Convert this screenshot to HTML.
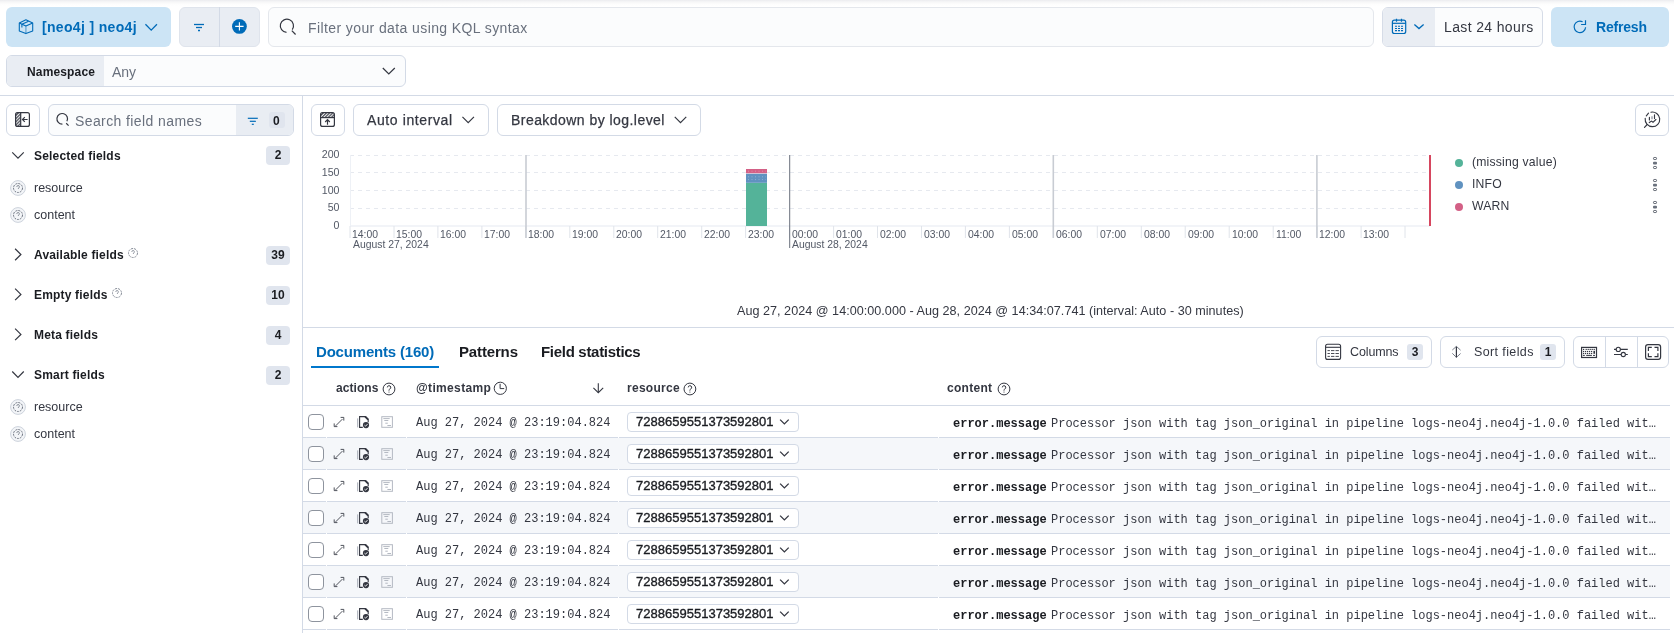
<!DOCTYPE html>
<html><head><meta charset="utf-8">
<style>
*{box-sizing:border-box;margin:0;padding:0}
html,body{width:1674px;height:633px;overflow:hidden;background:#fff;font-family:"Liberation Sans",sans-serif;color:#343741}
.a{position:absolute}
.t{position:absolute;white-space:pre;line-height:1;will-change:transform}
.s{position:absolute;overflow:visible}
</style></head>
<body>
<div class="a" style="left:0;top:0;width:1674px;height:6px;background:linear-gradient(#ebecef,#f6f6f7 30%,#fdfdfd 70%,#fff)"></div>

<div class="a" style="left:6px;top:7px;width:165px;height:40px;background:#cce4f5;border-radius:6px;"></div>
<svg class="s" style="left:14px;top:14px;" width="26" height="26" viewBox="14 14 26 26"><g fill="none" stroke="#006bb8" stroke-width="1.1" stroke-linejoin="round">
<path d="M25.9 19.8 L32.7 22.9 L32.7 30.9 L25.9 33.6 L19.3 30.9 L19.3 22.9 Z"/>
<path d="M19.3 22.9 L25.9 26.1 L32.7 22.9"/>
<path d="M21.9 27.5 L21.9 24.3 L28.6 21.2"/>
</g><path d="M25.9 26.3 L25.9 33.3" stroke="#006bb8" stroke-opacity="0.45" stroke-width="1.4"/></svg>
<div class="t" style="left:42px;top:20px;font-size:14px;font-weight:bold;color:#006bb8;letter-spacing:0.33px;">[neo4j ] neo4j</div>
<svg class="s" style="left:140px;top:18px;" width="22" height="16" viewBox="140 18 22 16"><path d="M145.45 24.3 L151.2 30.099999999999998 L156.95 24.3" fill="none" stroke="#006bb8" stroke-width="1.3"/></svg>
<div class="a" style="left:179px;top:7px;width:81px;height:40px;background:#e9edf3;border:1px solid #dfe4ec;border-radius:6px;"></div>
<div class="a" style="left:219px;top:7px;width:1px;height:40px;background:#d3dae6"></div>
<svg class="s" style="left:190px;top:20px;" width="20" height="14" viewBox="190 20 20 14"><g stroke="#006bb8" stroke-width="1.3"><path d="M194 24.5 H204"/><path d="M196 27.5 H202"/><path d="M198 30.5 H200"/></g></svg>
<svg class="s" style="left:230px;top:17px;" width="20" height="20" viewBox="230 17 20 20"><circle cx="239.4" cy="26.4" r="7.4" fill="#006bb8"/><path d="M235.2 26.4 H243.6 M239.4 22.2 V30.6" stroke="#fff" stroke-width="1.1"/></svg>
<div class="a" style="left:268px;top:7px;width:1106px;height:40px;background:#fbfcfd;border:1px solid #e4e7ec;border-radius:6px;"></div>
<svg class="s" style="left:276px;top:16px;" width="24" height="22" viewBox="276 16 24 22"><g fill="none" stroke="#343741" stroke-width="1.2"><path d="M286.5 32.4 A6.6 6.6 0 1 1 292.3 29.6"/><path d="M291.8 30.6 L295.6 34.5"/></g></svg>
<div class="t" style="left:308.3px;top:21px;font-size:14px;font-weight:normal;color:#69707d;letter-spacing:0.4px;">Filter your data using KQL syntax</div>
<div class="a" style="left:1382px;top:7px;width:161px;height:40px;border:1px solid #d6dce7;border-radius:6px;background:#fbfcfd;overflow:hidden"><div class="a" style="left:0;top:0;width:52px;height:40px;background:#e9edf3"></div></div>
<svg class="s" style="left:1388px;top:16px;" width="40" height="22" viewBox="1388 16 40 22"><g fill="none" stroke="#006bb8" stroke-width="1.2"><rect x="1392.4" y="20.2" width="13.3" height="13.3" rx="2"/><path d="M1392.4 23.3 H1405.7"/><path d="M1396.5 18.8 V21.8 M1401.5 18.8 V21.8"/></g>
<g stroke="#006bb8" stroke-width="1.1"><path d="M1395 26.3 h2 m1 0 h2 m1 0 h2 M1395 28.5 h2 m1 0 h2 m1 0 h2 M1395 30.6 h2 m1 0 h2 m1 0 h2"/></g>
<path d="M1414.4 24.4 L1419 28.6 L1423.6 24.4" fill="none" stroke="#006bb8" stroke-width="1.3"/></svg>
<div class="t" style="left:1444px;top:20.3px;font-size:14px;font-weight:normal;color:#343741;letter-spacing:0.36px;">Last 24 hours</div>
<div class="a" style="left:1551px;top:7px;width:118px;height:40px;background:#cce4f5;border-radius:6px;"></div>
<svg class="s" style="left:1570px;top:16px;" width="22" height="22" viewBox="1570 16 22 22"><g fill="none" stroke="#006bb8" stroke-width="1.2"><path d="M1582.6 21.8 A5.75 5.75 0 1 0 1585.6 27.2"/><path d="M1585.5 20.2 V24.5 H1581.1"/></g></svg>
<div class="t" style="left:1596.3px;top:19.6px;font-size:14px;font-weight:bold;color:#006bb8;letter-spacing:-0.19px;">Refresh</div>
<div class="a" style="left:6px;top:55px;width:400px;height:32px;border:1px solid #d3dae6;border-radius:6px;background:#fbfcfd;overflow:hidden"><div class="a" style="left:0;top:0;width:97px;height:32px;background:#e9edf3"></div></div>
<div class="t" style="left:27px;top:66px;font-size:12px;font-weight:bold;color:#1a1c21;letter-spacing:0.15px;">Namespace</div>
<div class="t" style="left:112px;top:65px;font-size:14px;font-weight:normal;color:#69707d;letter-spacing:0px;">Any</div>
<svg class="s" style="left:376px;top:62px;" width="26" height="18" viewBox="376 62 26 18"><path d="M382.8 68.0 L388.8 74.0 L394.8 68.0" fill="none" stroke="#343741" stroke-width="1.2"/></svg>
<div class="a" style="left:0;top:95px;width:1674px;height:1px;background:#d3dae6"></div>
<div class="a" style="left:302px;top:96px;width:1px;height:537px;background:#d3dae6"></div>
<div class="a" style="left:6px;top:104px;width:34px;height:32px;background:#fff;border:1px solid #d3dae6;border-radius:6px;"></div>
<svg class="s" style="left:12px;top:110px;" width="22" height="20" viewBox="12 110 22 20"><defs><pattern id="hatch" width="2.2" height="2.2" patternUnits="userSpaceOnUse" patternTransform="rotate(45)"><rect width="1.1" height="2.2" fill="#343741"/></pattern></defs>
<rect x="15.8" y="112.7" width="4.8" height="13.4" fill="url(#hatch)"/>
<g fill="none" stroke="#343741" stroke-width="1.2"><rect x="15.6" y="112.6" width="13.8" height="13.8" rx="2"/><path d="M20.7 112.6 V126.4"/><path d="M27.6 119.5 H22.6 M24.8 117.2 L22.5 119.5 L24.8 121.8"/></g></svg>
<div class="a" style="left:48px;top:104px;width:246px;height:32px;border:1px solid #d3dae6;border-radius:6px;background:#fbfcfd;overflow:hidden"><div class="a" style="left:187px;top:0;width:60px;height:32px;background:#e9edf3"></div></div>
<svg class="s" style="left:54px;top:112px;" width="18" height="18" viewBox="54 112 18 18"><g fill="none" stroke="#343741" stroke-width="1.2"><path d="M62.4 124.1 A5.3 5.3 0 1 1 66.9 121.3"/><path d="M66.2 123.3 L68.6 125.6"/></g></svg>
<div class="t" style="left:74.6px;top:114px;font-size:14px;font-weight:normal;color:#69707d;letter-spacing:0.4px;">Search field names</div>
<svg class="s" style="left:245px;top:114px;" width="16" height="12" viewBox="245 114 16 12"><g stroke="#006bb8" stroke-width="1.2"><path d="M247.8 118.3 H257.8"/><path d="M249.8 121.3 H255.8"/><path d="M251.8 124.3 H253.8"/></g></svg>
<div class="a" style="left:269px;top:112px;width:16px;height:16px;background:#e0e5ee;border-radius:3px"></div>
<div class="t" style="left:273px;top:115px;font-size:12px;font-weight:bold;color:#1a1c21;letter-spacing:0px;">0</div>
<svg class="s" style="left:8px;top:147px;" width="20" height="16" viewBox="8 147 20 16"><path d="M12.25 152.4 L18 158.20000000000002 L23.75 152.4" fill="none" stroke="#343741" stroke-width="1.2"/></svg>
<div class="t" style="left:34.4px;top:150px;font-size:12px;font-weight:bold;color:#1a1c21;letter-spacing:0.18px;">Selected fields</div>
<div class="a" style="left:266px;top:145.5px;width:24px;height:19px;background:#e0e5ee;border-radius:4px"></div>
<div class="t" style="left:266px;top:149px;width:24px;text-align:center;font-size:12px;font-weight:bold;color:#1a1c21">2</div>
<svg class="s" style="left:8px;top:178px;" width="20" height="20" viewBox="8 178 20 20"><circle cx="18" cy="188" r="7.4" fill="#f3f5f8" stroke="#cdd3dc" stroke-width="1"/><circle cx="18" cy="188" r="4.5" fill="none" stroke="#6f7682" stroke-width="1" stroke-dasharray="2 1"/><path d="M16.8 186.9 a1.3 1.3 0 1 1 1.6 1.2 v0.8" fill="none" stroke="#6f7682" stroke-width="0.8"/></svg>
<div class="t" style="left:34.4px;top:182px;font-size:12.5px;font-weight:normal;color:#343741;letter-spacing:0px;">resource</div>
<svg class="s" style="left:8px;top:205px;" width="20" height="20" viewBox="8 205 20 20"><circle cx="18" cy="215" r="7.4" fill="#f3f5f8" stroke="#cdd3dc" stroke-width="1"/><circle cx="18" cy="215" r="4.5" fill="none" stroke="#6f7682" stroke-width="1" stroke-dasharray="2 1"/><path d="M16.8 213.9 a1.3 1.3 0 1 1 1.6 1.2 v0.8" fill="none" stroke="#6f7682" stroke-width="0.8"/></svg>
<div class="t" style="left:34.4px;top:209px;font-size:12.5px;font-weight:normal;color:#343741;letter-spacing:0px;">content</div>
<svg class="s" style="left:10px;top:246px;" width="16" height="18" viewBox="10 246 16 18"><path d="M15.1 248.75 L20.9 254.5 L15.1 260.25" fill="none" stroke="#343741" stroke-width="1.2"/></svg>
<div class="t" style="left:34.4px;top:249.3px;font-size:12px;font-weight:bold;color:#1a1c21;letter-spacing:0.18px;">Available fields</div>
<svg class="s" style="left:127px;top:246.8px;" width="12" height="12" viewBox="127 246.8 12 12"><circle cx="133" cy="252.8" r="4.5" fill="none" stroke="#8a909b" stroke-width="1" stroke-dasharray="2.2 0.9"/><path d="M131.8 251.70000000000002 a1.3 1.3 0 1 1 1.6 1.2 v0.9" fill="none" stroke="#8a909b" stroke-width="0.9"/></svg>
<div class="a" style="left:266px;top:245.5px;width:24px;height:19px;background:#e0e5ee;border-radius:4px"></div>
<div class="t" style="left:266px;top:249px;width:24px;text-align:center;font-size:12px;font-weight:bold;color:#1a1c21">39</div>
<svg class="s" style="left:10px;top:286px;" width="16" height="18" viewBox="10 286 16 18"><path d="M15.1 288.65 L20.9 294.4 L15.1 300.15" fill="none" stroke="#343741" stroke-width="1.2"/></svg>
<div class="t" style="left:34.4px;top:289.2px;font-size:12px;font-weight:bold;color:#1a1c21;letter-spacing:0.18px;">Empty fields</div>
<svg class="s" style="left:111px;top:286.8px;" width="12" height="12" viewBox="111 286.8 12 12"><circle cx="117" cy="292.8" r="4.5" fill="none" stroke="#8a909b" stroke-width="1" stroke-dasharray="2.2 0.9"/><path d="M115.8 291.7 a1.3 1.3 0 1 1 1.6 1.2 v0.9" fill="none" stroke="#8a909b" stroke-width="0.9"/></svg>
<div class="a" style="left:266px;top:285.5px;width:24px;height:19px;background:#e0e5ee;border-radius:4px"></div>
<div class="t" style="left:266px;top:289px;width:24px;text-align:center;font-size:12px;font-weight:bold;color:#1a1c21">10</div>
<svg class="s" style="left:10px;top:326px;" width="16" height="18" viewBox="10 326 16 18"><path d="M15.1 328.65 L20.9 334.4 L15.1 340.15" fill="none" stroke="#343741" stroke-width="1.2"/></svg>
<div class="t" style="left:34.4px;top:329.2px;font-size:12px;font-weight:bold;color:#1a1c21;letter-spacing:0.18px;">Meta fields</div>
<div class="a" style="left:266px;top:325.5px;width:24px;height:19px;background:#e0e5ee;border-radius:4px"></div>
<div class="t" style="left:266px;top:329px;width:24px;text-align:center;font-size:12px;font-weight:bold;color:#1a1c21">4</div>
<svg class="s" style="left:8px;top:367px;" width="20" height="16" viewBox="8 367 20 16"><path d="M12.25 371.50000000000006 L18 377.3 L23.75 371.50000000000006" fill="none" stroke="#343741" stroke-width="1.2"/></svg>
<div class="t" style="left:34.4px;top:369.1px;font-size:12px;font-weight:bold;color:#1a1c21;letter-spacing:0.18px;">Smart fields</div>
<div class="a" style="left:266px;top:365.5px;width:24px;height:19px;background:#e0e5ee;border-radius:4px"></div>
<div class="t" style="left:266px;top:369px;width:24px;text-align:center;font-size:12px;font-weight:bold;color:#1a1c21">2</div>
<svg class="s" style="left:8px;top:397px;" width="20" height="20" viewBox="8 397 20 20"><circle cx="18" cy="407" r="7.4" fill="#f3f5f8" stroke="#cdd3dc" stroke-width="1"/><circle cx="18" cy="407" r="4.5" fill="none" stroke="#6f7682" stroke-width="1" stroke-dasharray="2 1"/><path d="M16.8 405.9 a1.3 1.3 0 1 1 1.6 1.2 v0.8" fill="none" stroke="#6f7682" stroke-width="0.8"/></svg>
<div class="t" style="left:34.4px;top:401px;font-size:12.5px;font-weight:normal;color:#343741;letter-spacing:0px;">resource</div>
<svg class="s" style="left:8px;top:424px;" width="20" height="20" viewBox="8 424 20 20"><circle cx="18" cy="434" r="7.4" fill="#f3f5f8" stroke="#cdd3dc" stroke-width="1"/><circle cx="18" cy="434" r="4.5" fill="none" stroke="#6f7682" stroke-width="1" stroke-dasharray="2 1"/><path d="M16.8 432.9 a1.3 1.3 0 1 1 1.6 1.2 v0.8" fill="none" stroke="#6f7682" stroke-width="0.8"/></svg>
<div class="t" style="left:34.4px;top:428px;font-size:12.5px;font-weight:normal;color:#343741;letter-spacing:0px;">content</div>
<div class="a" style="left:311px;top:104px;width:34px;height:32px;background:#fff;border:1px solid #d3dae6;border-radius:6px;"></div>
<svg class="s" style="left:316px;top:108px;" width="24" height="24" viewBox="316 108 24 24"><rect x="320.8" y="112.7" width="13.4" height="4.8" fill="url(#hatch)"/>
<g fill="none" stroke="#343741" stroke-width="1.2"><rect x="320.6" y="112.6" width="13.8" height="13.8" rx="2"/><path d="M320.6 117.6 H334.4"/><path d="M327.5 124.8 V119.8 M325.2 122 L327.5 119.7 L329.8 122"/></g></svg>
<div class="a" style="left:353px;top:104px;width:136px;height:32px;background:#fff;border:1px solid #d3dae6;border-radius:6px;"></div>
<div class="t" style="left:367px;top:112.6px;font-size:14px;font-weight:normal;color:#343741;letter-spacing:0.6px;-webkit-text-stroke:0.25px #343741;">Auto interval</div>
<svg class="s" style="left:458px;top:112px;" width="20" height="16" viewBox="458 112 20 16"><path d="M462.45 116.89999999999999 L468.2 122.7 L473.95 116.89999999999999" fill="none" stroke="#343741" stroke-width="1.2"/></svg>
<div class="a" style="left:497px;top:104px;width:204px;height:32px;background:#fff;border:1px solid #d3dae6;border-radius:6px;"></div>
<div class="t" style="left:510.5px;top:112.6px;font-size:14px;font-weight:normal;color:#343741;letter-spacing:0.45px;-webkit-text-stroke:0.25px #343741;">Breakdown by log.level</div>
<svg class="s" style="left:670px;top:112px;" width="20" height="16" viewBox="670 112 20 16"><path d="M674.75 116.89999999999999 L680.5 122.7 L686.25 116.89999999999999" fill="none" stroke="#343741" stroke-width="1.2"/></svg>
<div class="a" style="left:1635px;top:104px;width:34px;height:32px;background:#fff;border:1px solid #d3dae6;border-radius:6px;"></div>
<svg class="s" style="left:1640px;top:108px;" width="26" height="24" viewBox="1640 108 26 24"><g fill="none" stroke="#343741" stroke-width="1.15" stroke-linecap="round"><path d="M1650.9 112.2 A7.3 7.3 0 1 1 1645.2 118.4"/><path d="M1646.3 115.8 L1648.5 113.2"/><path d="M1647.2 124.5 L1644.5 127.4"/><path d="M1649.4 117.4 V120 M1654.5 114.8 V118.5"/><path d="M1649.3 122.6 L1651.5 121.1 L1653 122.3 L1655.9 119.5"/></g><path d="M1652 116.3 V119.3" stroke="#8a909b" stroke-width="1.2"/></svg>
<svg class="s" style="left:304px;top:140px;" width="1370" height="120" viewBox="304 140 1370 120"><path d="M350 155.5 H1430" stroke="#e6e9ef" stroke-width="1" stroke-dasharray="4 4"/><path d="M350 172.5 H1430" stroke="#e6e9ef" stroke-width="1" stroke-dasharray="4 4"/><path d="M350 190.5 H1430" stroke="#e6e9ef" stroke-width="1" stroke-dasharray="4 4"/><path d="M350 208.5 H1430" stroke="#e6e9ef" stroke-width="1" stroke-dasharray="4 4"/><path d="M350 226 H1430" stroke="#eef1f6" stroke-width="1.5"/><path d="M350.5 155 V226" stroke="#eef1f6" stroke-width="1"/><path d="M350.0 226 V238" stroke="#e0e4ea" stroke-width="1"/><path d="M394.0 226 V238" stroke="#e0e4ea" stroke-width="1"/><path d="M437.9 226 V238" stroke="#e0e4ea" stroke-width="1"/><path d="M481.9 226 V238" stroke="#e0e4ea" stroke-width="1"/><path d="M525.8 226 V238" stroke="#e0e4ea" stroke-width="1"/><path d="M569.8 226 V238" stroke="#e0e4ea" stroke-width="1"/><path d="M613.8 226 V238" stroke="#e0e4ea" stroke-width="1"/><path d="M657.7 226 V238" stroke="#e0e4ea" stroke-width="1"/><path d="M701.7 226 V238" stroke="#e0e4ea" stroke-width="1"/><path d="M745.6 226 V238" stroke="#e0e4ea" stroke-width="1"/><path d="M789.6 226 V238" stroke="#e0e4ea" stroke-width="1"/><path d="M833.6 226 V238" stroke="#e0e4ea" stroke-width="1"/><path d="M877.5 226 V238" stroke="#e0e4ea" stroke-width="1"/><path d="M921.5 226 V238" stroke="#e0e4ea" stroke-width="1"/><path d="M965.4 226 V238" stroke="#e0e4ea" stroke-width="1"/><path d="M1009.4 226 V238" stroke="#e0e4ea" stroke-width="1"/><path d="M1053.4 226 V238" stroke="#e0e4ea" stroke-width="1"/><path d="M1097.3 226 V238" stroke="#e0e4ea" stroke-width="1"/><path d="M1141.3 226 V238" stroke="#e0e4ea" stroke-width="1"/><path d="M1185.2 226 V238" stroke="#e0e4ea" stroke-width="1"/><path d="M1229.2 226 V238" stroke="#e0e4ea" stroke-width="1"/><path d="M1273.2 226 V238" stroke="#e0e4ea" stroke-width="1"/><path d="M1317.1 226 V238" stroke="#e0e4ea" stroke-width="1"/><path d="M1361.1 226 V238" stroke="#e0e4ea" stroke-width="1"/><path d="M1405.0 226 V238" stroke="#e0e4ea" stroke-width="1"/><rect x="746" y="182.8" width="21" height="43.2" fill="#54b399"/><rect x="746" y="173.6" width="21" height="9.2" fill="#6092c0"/><rect x="746" y="169" width="21" height="4.3" fill="#d36086"/><path d="M746 173.45 H767" stroke="#fff" stroke-opacity="0.5" stroke-width="0.5"/><path d="M748 171.2 H766" stroke="#fff" stroke-opacity="0.35" stroke-width="0.8" stroke-dasharray="1 2.5"/><path d="M748 176.8 H766" stroke="#fff" stroke-opacity="0.35" stroke-width="0.8" stroke-dasharray="1 2.5"/><path d="M748 179.6 H766" stroke="#fff" stroke-opacity="0.35" stroke-width="0.8" stroke-dasharray="1 2.5"/><path d="M526 155 V238" stroke="#c8ccd3" stroke-width="1.6"/><path d="M789.7 155 V248" stroke="#6a717d" stroke-width="1"/><path d="M1053.3 155 V238" stroke="#c8ccd3" stroke-width="1.6"/><path d="M1316.9 155 V238" stroke="#c8ccd3" stroke-width="1.6"/><path d="M1430 155 V226" stroke="#d6465f" stroke-width="2"/></svg>
<div class="t" style="left:300px;top:149px;width:39.5px;text-align:right;font-size:10.6px;color:#535966">200</div>
<div class="t" style="left:300px;top:166.75px;width:39.5px;text-align:right;font-size:10.6px;color:#535966">150</div>
<div class="t" style="left:300px;top:184.5px;width:39.5px;text-align:right;font-size:10.6px;color:#535966">100</div>
<div class="t" style="left:300px;top:202.25px;width:39.5px;text-align:right;font-size:10.6px;color:#535966">50</div>
<div class="t" style="left:300px;top:220px;width:39.5px;text-align:right;font-size:10.6px;color:#535966">0</div>
<div class="t" style="left:352.3px;top:229.5px;font-size:10.4px;color:#535966">14:00</div>
<div class="t" style="left:396.3px;top:229.5px;font-size:10.4px;color:#535966">15:00</div>
<div class="t" style="left:440.2px;top:229.5px;font-size:10.4px;color:#535966">16:00</div>
<div class="t" style="left:484.2px;top:229.5px;font-size:10.4px;color:#535966">17:00</div>
<div class="t" style="left:528.1px;top:229.5px;font-size:10.4px;color:#535966">18:00</div>
<div class="t" style="left:572.1px;top:229.5px;font-size:10.4px;color:#535966">19:00</div>
<div class="t" style="left:616.1px;top:229.5px;font-size:10.4px;color:#535966">20:00</div>
<div class="t" style="left:660.0px;top:229.5px;font-size:10.4px;color:#535966">21:00</div>
<div class="t" style="left:704.0px;top:229.5px;font-size:10.4px;color:#535966">22:00</div>
<div class="t" style="left:747.9px;top:229.5px;font-size:10.4px;color:#535966">23:00</div>
<div class="t" style="left:791.9px;top:229.5px;font-size:10.4px;color:#535966">00:00</div>
<div class="t" style="left:835.9px;top:229.5px;font-size:10.4px;color:#535966">01:00</div>
<div class="t" style="left:879.8px;top:229.5px;font-size:10.4px;color:#535966">02:00</div>
<div class="t" style="left:923.8px;top:229.5px;font-size:10.4px;color:#535966">03:00</div>
<div class="t" style="left:967.7px;top:229.5px;font-size:10.4px;color:#535966">04:00</div>
<div class="t" style="left:1011.7px;top:229.5px;font-size:10.4px;color:#535966">05:00</div>
<div class="t" style="left:1055.7px;top:229.5px;font-size:10.4px;color:#535966">06:00</div>
<div class="t" style="left:1099.6px;top:229.5px;font-size:10.4px;color:#535966">07:00</div>
<div class="t" style="left:1143.6px;top:229.5px;font-size:10.4px;color:#535966">08:00</div>
<div class="t" style="left:1187.5px;top:229.5px;font-size:10.4px;color:#535966">09:00</div>
<div class="t" style="left:1231.5px;top:229.5px;font-size:10.4px;color:#535966">10:00</div>
<div class="t" style="left:1275.5px;top:229.5px;font-size:10.4px;color:#535966">11:00</div>
<div class="t" style="left:1319.4px;top:229.5px;font-size:10.4px;color:#535966">12:00</div>
<div class="t" style="left:1363.4px;top:229.5px;font-size:10.4px;color:#535966">13:00</div>
<div class="t" style="left:352.6px;top:240px;font-size:10.4px;color:#535966">August 27, 2024</div>
<div class="t" style="left:792px;top:240px;font-size:10.4px;color:#535966">August 28, 2024</div>
<svg class="s" style="left:1454px;top:157.9px;" width="10" height="10" viewBox="1454 157.9 10 10"><circle cx="1459" cy="162.9" r="4" fill="#54b399"/></svg>
<div class="t" style="left:1471.6px;top:155.9px;font-size:12.2px;letter-spacing:0.2px;color:#343741">(missing value)</div>
<svg class="s" style="left:1650px;top:155.9px;" width="10" height="14" viewBox="1650 155.9 10 14"><g fill="none" stroke="#5a606b" stroke-width="1"><rect x="1653.5" y="157.4" width="3" height="2" rx="0.7"/><rect x="1653.5" y="166.4" width="3" height="2" rx="0.7"/></g><rect x="1653" y="161.70000000000002" width="4" height="2.6" rx="1" fill="#6a717d"/></svg>
<svg class="s" style="left:1454px;top:179.8px;" width="10" height="10" viewBox="1454 179.8 10 10"><circle cx="1459" cy="184.8" r="4" fill="#6092c0"/></svg>
<div class="t" style="left:1471.6px;top:177.8px;font-size:12.2px;letter-spacing:0.2px;color:#343741">INFO</div>
<svg class="s" style="left:1650px;top:177.8px;" width="10" height="14" viewBox="1650 177.8 10 14"><g fill="none" stroke="#5a606b" stroke-width="1"><rect x="1653.5" y="179.3" width="3" height="2" rx="0.7"/><rect x="1653.5" y="188.3" width="3" height="2" rx="0.7"/></g><rect x="1653" y="183.60000000000002" width="4" height="2.6" rx="1" fill="#6a717d"/></svg>
<svg class="s" style="left:1454px;top:201.8px;" width="10" height="10" viewBox="1454 201.8 10 10"><circle cx="1459" cy="206.8" r="4" fill="#d36086"/></svg>
<div class="t" style="left:1471.6px;top:199.8px;font-size:12.2px;letter-spacing:0.2px;color:#343741">WARN</div>
<svg class="s" style="left:1650px;top:199.8px;" width="10" height="14" viewBox="1650 199.8 10 14"><g fill="none" stroke="#5a606b" stroke-width="1"><rect x="1653.5" y="201.3" width="3" height="2" rx="0.7"/><rect x="1653.5" y="210.3" width="3" height="2" rx="0.7"/></g><rect x="1653" y="205.60000000000002" width="4" height="2.6" rx="1" fill="#6a717d"/></svg>
<div class="t" style="left:737px;top:305px;font-size:12.6px;font-weight:normal;color:#343741;letter-spacing:0.026px;">Aug 27, 2024 @ 14:00:00.000 - Aug 28, 2024 @ 14:34:07.741 (interval: Auto - 30 minutes)</div>
<div class="a" style="left:303px;top:327px;width:1371px;height:1px;background:#d3dae6"></div>
<div class="t" style="left:315.7px;top:344px;font-size:15px;font-weight:bold;color:#006bb8;letter-spacing:-0.19px;">Documents (160)</div>
<div class="a" style="left:311px;top:366px;width:128px;height:2px;background:#0077cc"></div>
<div class="t" style="left:459px;top:344px;font-size:15px;font-weight:bold;color:#1a1c21;letter-spacing:-0.15px;">Patterns</div>
<div class="t" style="left:541.3px;top:344px;font-size:15px;font-weight:bold;color:#1a1c21;letter-spacing:-0.3px;">Field statistics</div>
<div class="a" style="left:1316px;top:336px;width:116px;height:32px;background:#fff;border:1px solid #d3dae6;border-radius:6px;"></div>
<svg class="s" style="left:1322px;top:341px;" width="22" height="22" viewBox="1322 341 22 22"><g fill="none" stroke="#343741" stroke-width="1.1"><rect x="1325.6" y="344.2" width="15" height="15.2" rx="2"/><path d="M1325.6 347.3 H1340.6"/></g>
<g stroke="#343741" stroke-width="0.9"><path d="M1327.5 350.6 h2.4 m1.1 0 h3.4 m1.1 0 h3.4 M1327.5 353.5 h2.4 m1.1 0 h3.4 m1.1 0 h3.4 M1327.5 356.4 h2.4 m1.1 0 h3.4 m1.1 0 h3.4"/></g></svg>
<div class="t" style="left:1349.6px;top:346px;font-size:12.5px;font-weight:normal;color:#343741;letter-spacing:-0.12px;">Columns</div>
<div class="a" style="left:1407px;top:344px;width:16px;height:16px;background:#e0e5ee;border-radius:3px"></div>
<div class="t" style="left:1407px;top:346px;width:16px;text-align:center;font-size:12px;font-weight:bold;color:#1a1c21">3</div>
<div class="a" style="left:1440px;top:336px;width:125px;height:32px;background:#fff;border:1px solid #d3dae6;border-radius:6px;"></div>
<svg class="s" style="left:1448px;top:342px;" width="18" height="20" viewBox="1448 342 18 20"><path d="M1456.4 346.4 V357.4" stroke="#343741" stroke-width="1.2"/><g fill="none" stroke="#6a717d" stroke-width="0.9"><path d="M1452.3 350 L1456.4 346.4 L1460.6 350.2"/><path d="M1452.3 353.3 L1456.4 357.4 L1460.6 353.5"/></g></svg>
<div class="t" style="left:1473.8px;top:346px;font-size:12.5px;font-weight:normal;color:#343741;letter-spacing:0.38px;">Sort fields</div>
<div class="a" style="left:1540px;top:344px;width:16px;height:16px;background:#e0e5ee;border-radius:3px"></div>
<div class="t" style="left:1540px;top:346px;width:16px;text-align:center;font-size:12px;font-weight:bold;color:#1a1c21">1</div>
<div class="a" style="left:1573px;top:336px;width:96px;height:32px;background:#fff;border:1px solid #d3dae6;border-radius:6px;"></div>
<div class="a" style="left:1605px;top:337px;width:1px;height:30px;background:#d3dae6"></div>
<div class="a" style="left:1637px;top:337px;width:1px;height:30px;background:#d3dae6"></div>
<svg class="s" style="left:1578px;top:344px;" width="22" height="16" viewBox="1578 344 22 16"><rect x="1581.6" y="347.4" width="14.9" height="10.1" fill="none" stroke="#343741" stroke-width="1.2"/><rect x="1583" y="348.8" width="1.2" height="1.2" fill="#343741"/><rect x="1585.6" y="348.8" width="1.2" height="1.2" fill="#343741"/><rect x="1587.6" y="348.8" width="1.2" height="1.2" fill="#343741"/><rect x="1589.6" y="348.8" width="1.2" height="1.2" fill="#343741"/><rect x="1591.6" y="348.8" width="1.2" height="1.2" fill="#343741"/><rect x="1593.6" y="348.8" width="1.2" height="1.2" fill="#343741"/><rect x="1583" y="350.9" width="1.2" height="1.2" fill="#343741"/><rect x="1585" y="350.9" width="1.2" height="1.2" fill="#343741"/><rect x="1587" y="350.9" width="1.2" height="1.2" fill="#343741"/><rect x="1589" y="350.9" width="1.2" height="1.2" fill="#343741"/><rect x="1591" y="350.9" width="1.2" height="1.2" fill="#343741"/><rect x="1583" y="352.9" width="1.2" height="1.2" fill="#343741"/><rect x="1585" y="352.9" width="1.2" height="1.2" fill="#343741"/><rect x="1587" y="352.9" width="1.2" height="1.2" fill="#343741"/><rect x="1589" y="352.9" width="1.2" height="1.2" fill="#343741"/><rect x="1591" y="352.9" width="1.2" height="1.2" fill="#343741"/><rect x="1593.4" y="350.8" width="1.6" height="3" fill="#343741"/><path d="M1582.9 355.4 h1.9 M1586.2 355.4 h5.7 M1593 355.4 h2" stroke="#343741" stroke-width="1"/></svg>
<svg class="s" style="left:1610px;top:344px;" width="22" height="16" viewBox="1610 344 22 16"><g fill="none" stroke="#343741" stroke-width="1.1"><path d="M1614 349.4 H1616.1 M1620.5 349.4 H1627.8 M1614 354.5 H1621.1 M1625.5 354.5 H1627.8"/><circle cx="1618.3" cy="349.4" r="2.1"/><circle cx="1623.3" cy="354.5" r="2.1"/></g></svg>
<svg class="s" style="left:1642px;top:341px;" width="22" height="22" viewBox="1642 341 22 22"><g fill="none" stroke="#343741" stroke-width="1.2"><rect x="1645.6" y="344.6" width="15" height="14.8" rx="2.4"/><path d="M1648.4 350.9 V347.4 H1651.8 M1654.5 347.4 H1657.9 V350.9 M1657.9 353.2 V356.6 H1654.5 M1651.8 356.6 H1648.4 V353.2"/></g></svg>
<div class="t" style="left:335.5px;top:382px;font-size:12px;font-weight:bold;color:#343741;letter-spacing:0.05px;">actions</div>
<svg class="s" style="left:380px;top:380px;" width="18" height="18" viewBox="380 380 18 18"><circle cx="389" cy="389" r="5.9" fill="none" stroke="#343741" stroke-width="1"/><path d="M387.3 387.4 a1.75 1.75 0 1 1 2.3 1.7 q-0.6 0.3 -0.6 1.1 v0.5" fill="none" stroke="#343741" stroke-width="1"/><circle cx="389" cy="392" r="0.6" fill="#343741"/></svg>
<div class="t" style="left:415.6px;top:382px;font-size:12px;font-weight:bold;color:#343741;letter-spacing:0.35px;">@timestamp</div>
<svg class="s" style="left:492px;top:380px;" width="18" height="18" viewBox="492 380 18 18"><circle cx="500.3" cy="388.3" r="6.1" fill="none" stroke="#343741" stroke-width="1"/><path d="M500.1 383.8 V388.6 H504.2" fill="none" stroke="#343741" stroke-width="1"/></svg>
<svg class="s" style="left:590px;top:380px;" width="16" height="16" viewBox="590 380 16 16"><g fill="none" stroke="#343741" stroke-width="1.1"><path d="M598.3 383.2 V392.6"/><path d="M593.4 387.8 L598.3 392.7 L603.2 387.8"/></g></svg>
<div class="t" style="left:627.2px;top:382px;font-size:12px;font-weight:bold;color:#343741;letter-spacing:0.28px;">resource</div>
<svg class="s" style="left:682px;top:380px;" width="18" height="18" viewBox="682 380 18 18"><circle cx="689.9" cy="389" r="5.9" fill="none" stroke="#343741" stroke-width="1"/><path d="M688.1999999999999 387.4 a1.75 1.75 0 1 1 2.3 1.7 q-0.6 0.3 -0.6 1.1 v0.5" fill="none" stroke="#343741" stroke-width="1"/><circle cx="689.9" cy="392" r="0.6" fill="#343741"/></svg>
<div class="t" style="left:947px;top:382px;font-size:12px;font-weight:bold;color:#343741;letter-spacing:0.28px;">content</div>
<svg class="s" style="left:996px;top:380px;" width="18" height="18" viewBox="996 380 18 18"><circle cx="1004" cy="389" r="5.9" fill="none" stroke="#343741" stroke-width="1"/><path d="M1002.3 387.4 a1.75 1.75 0 1 1 2.3 1.7 q-0.6 0.3 -0.6 1.1 v0.5" fill="none" stroke="#343741" stroke-width="1"/><circle cx="1004" cy="392" r="0.6" fill="#343741"/></svg>
<div class="a" style="left:303px;top:405px;width:1367px;height:1px;background:#d3dae6"></div>
<div class="a" style="left:303px;top:437px;width:1367px;height:1px;background:#d3dae6"></div>
<div class="a" style="left:326px;top:437px;width:1px;height:1px;background:#fff"></div>
<div class="a" style="left:406px;top:437px;width:1px;height:1px;background:#fff"></div>
<div class="a" style="left:618px;top:437px;width:1px;height:1px;background:#fff"></div>
<div class="a" style="left:938px;top:437px;width:1px;height:1px;background:#fff"></div>
<div class="a" style="left:308px;top:414px;width:16px;height:16px;border:1px solid #8e949e;border-radius:4px;background:#fff"></div>
<svg class="s" style="left:330px;top:412px;" width="70" height="20" viewBox="330 412 70 20"><g fill="none" stroke="#343741" stroke-width="0.95" stroke-opacity="0.9"><path d="M335.6 425.9 L342.4 419.1"/><path d="M340.6 417.4 H343.8 V420.6"/><path d="M334.2 423.4 V426.6 H337.4"/></g>
<g fill="none" stroke="#343741" stroke-width="1.1"><path d="M362.8 427.4 H359.6 V416.6 H365.4 L368.2 419.4 V422.2"/></g>
<path d="M365.2 416.6 L368.2 419.6" stroke="#343741" stroke-width="2"/>
<path d="M357.7 418.4 V427.4" stroke="#a6abb5" stroke-width="1"/>
<circle cx="366" cy="425.1" r="3.1" fill="#343741"/><path d="M364.5 425.2 L365.6 426.2 L367.5 424.1" fill="none" stroke="#fff" stroke-width="0.9"/>
<g fill="none" stroke="#b4b9c2" stroke-width="1"><rect x="381.8" y="416.7" width="10.6" height="10.6"/><path d="M383.3 418.6 h6.4 M384.3 420.5 h4 M385.3 423.2 h2.5 M387.4 425.5 h3.6"/></g></svg>
<div class="t" style="left:415.5px;top:417.4px;font-size:12px;font-weight:normal;color:#343741;letter-spacing:0px;font-family:'Liberation Mono',monospace;">Aug 27, 2024 @ 23:19:04.824</div>
<div class="a" style="left:627px;top:412px;width:172px;height:20px;border:1px solid #d3dae6;border-radius:4px;background:#fff"></div>
<div class="t" style="left:636.3px;top:415.4px;font-size:13px;font-weight:normal;color:#1a1c21;letter-spacing:0.01px;-webkit-text-stroke:0.35px #1a1c21;">7288659551373592801</div>
<svg class="s" style="left:776px;top:416px;" width="16" height="12" viewBox="776 416 16 12"><path d="M780.1 419.65000000000003 L784.4 423.95 L788.6999999999999 419.65000000000003" fill="none" stroke="#343741" stroke-width="1.3"/></svg>
<div class="t" style="left:952.6px;top:417.8px;font-size:12px;color:#1a1c21;font-weight:bold;font-family:Liberation Mono,monospace">error.message</div>
<div class="t" style="left:1051.2px;top:417.8px;font-size:12px;color:#343741;font-family:Liberation Mono,monospace">Processor json with tag json_original in pipeline logs-neo4j.neo4j-1.0.0 failed wit…</div>
<div class="a" style="left:303px;top:438px;width:1367px;height:31px;background:#f5f7fa"></div>
<div class="a" style="left:303px;top:469px;width:1367px;height:1px;background:#d3dae6"></div>
<div class="a" style="left:326px;top:469px;width:1px;height:1px;background:#fff"></div>
<div class="a" style="left:406px;top:469px;width:1px;height:1px;background:#fff"></div>
<div class="a" style="left:618px;top:469px;width:1px;height:1px;background:#fff"></div>
<div class="a" style="left:938px;top:469px;width:1px;height:1px;background:#fff"></div>
<div class="a" style="left:308px;top:446px;width:16px;height:16px;border:1px solid #8e949e;border-radius:4px;background:#fff"></div>
<svg class="s" style="left:330px;top:444px;" width="70" height="20" viewBox="330 444 70 20"><g fill="none" stroke="#343741" stroke-width="0.95" stroke-opacity="0.9"><path d="M335.6 457.9 L342.4 451.1"/><path d="M340.6 449.4 H343.8 V452.6"/><path d="M334.2 455.4 V458.6 H337.4"/></g>
<g fill="none" stroke="#343741" stroke-width="1.1"><path d="M362.8 459.4 H359.6 V448.6 H365.4 L368.2 451.4 V454.2"/></g>
<path d="M365.2 448.6 L368.2 451.6" stroke="#343741" stroke-width="2"/>
<path d="M357.7 450.4 V459.4" stroke="#a6abb5" stroke-width="1"/>
<circle cx="366" cy="457.1" r="3.1" fill="#343741"/><path d="M364.5 457.2 L365.6 458.2 L367.5 456.1" fill="none" stroke="#fff" stroke-width="0.9"/>
<g fill="none" stroke="#b4b9c2" stroke-width="1"><rect x="381.8" y="448.7" width="10.6" height="10.6"/><path d="M383.3 450.6 h6.4 M384.3 452.5 h4 M385.3 455.2 h2.5 M387.4 457.5 h3.6"/></g></svg>
<div class="t" style="left:415.5px;top:449.4px;font-size:12px;font-weight:normal;color:#343741;letter-spacing:0px;font-family:'Liberation Mono',monospace;">Aug 27, 2024 @ 23:19:04.824</div>
<div class="a" style="left:627px;top:444px;width:172px;height:20px;border:1px solid #d3dae6;border-radius:4px;background:#fff"></div>
<div class="t" style="left:636.3px;top:447.4px;font-size:13px;font-weight:normal;color:#1a1c21;letter-spacing:0.01px;-webkit-text-stroke:0.35px #1a1c21;">7288659551373592801</div>
<svg class="s" style="left:776px;top:448px;" width="16" height="12" viewBox="776 448 16 12"><path d="M780.1 451.65000000000003 L784.4 455.95 L788.6999999999999 451.65000000000003" fill="none" stroke="#343741" stroke-width="1.3"/></svg>
<div class="t" style="left:952.6px;top:449.8px;font-size:12px;color:#1a1c21;font-weight:bold;font-family:Liberation Mono,monospace">error.message</div>
<div class="t" style="left:1051.2px;top:449.8px;font-size:12px;color:#343741;font-family:Liberation Mono,monospace">Processor json with tag json_original in pipeline logs-neo4j.neo4j-1.0.0 failed wit…</div>
<div class="a" style="left:303px;top:501px;width:1367px;height:1px;background:#d3dae6"></div>
<div class="a" style="left:326px;top:501px;width:1px;height:1px;background:#fff"></div>
<div class="a" style="left:406px;top:501px;width:1px;height:1px;background:#fff"></div>
<div class="a" style="left:618px;top:501px;width:1px;height:1px;background:#fff"></div>
<div class="a" style="left:938px;top:501px;width:1px;height:1px;background:#fff"></div>
<div class="a" style="left:308px;top:478px;width:16px;height:16px;border:1px solid #8e949e;border-radius:4px;background:#fff"></div>
<svg class="s" style="left:330px;top:476px;" width="70" height="20" viewBox="330 476 70 20"><g fill="none" stroke="#343741" stroke-width="0.95" stroke-opacity="0.9"><path d="M335.6 489.9 L342.4 483.1"/><path d="M340.6 481.4 H343.8 V484.6"/><path d="M334.2 487.4 V490.6 H337.4"/></g>
<g fill="none" stroke="#343741" stroke-width="1.1"><path d="M362.8 491.4 H359.6 V480.6 H365.4 L368.2 483.4 V486.2"/></g>
<path d="M365.2 480.6 L368.2 483.6" stroke="#343741" stroke-width="2"/>
<path d="M357.7 482.4 V491.4" stroke="#a6abb5" stroke-width="1"/>
<circle cx="366" cy="489.1" r="3.1" fill="#343741"/><path d="M364.5 489.2 L365.6 490.2 L367.5 488.1" fill="none" stroke="#fff" stroke-width="0.9"/>
<g fill="none" stroke="#b4b9c2" stroke-width="1"><rect x="381.8" y="480.7" width="10.6" height="10.6"/><path d="M383.3 482.6 h6.4 M384.3 484.5 h4 M385.3 487.2 h2.5 M387.4 489.5 h3.6"/></g></svg>
<div class="t" style="left:415.5px;top:481.4px;font-size:12px;font-weight:normal;color:#343741;letter-spacing:0px;font-family:'Liberation Mono',monospace;">Aug 27, 2024 @ 23:19:04.824</div>
<div class="a" style="left:627px;top:476px;width:172px;height:20px;border:1px solid #d3dae6;border-radius:4px;background:#fff"></div>
<div class="t" style="left:636.3px;top:479.4px;font-size:13px;font-weight:normal;color:#1a1c21;letter-spacing:0.01px;-webkit-text-stroke:0.35px #1a1c21;">7288659551373592801</div>
<svg class="s" style="left:776px;top:480px;" width="16" height="12" viewBox="776 480 16 12"><path d="M780.1 483.65000000000003 L784.4 487.95 L788.6999999999999 483.65000000000003" fill="none" stroke="#343741" stroke-width="1.3"/></svg>
<div class="t" style="left:952.6px;top:481.8px;font-size:12px;color:#1a1c21;font-weight:bold;font-family:Liberation Mono,monospace">error.message</div>
<div class="t" style="left:1051.2px;top:481.8px;font-size:12px;color:#343741;font-family:Liberation Mono,monospace">Processor json with tag json_original in pipeline logs-neo4j.neo4j-1.0.0 failed wit…</div>
<div class="a" style="left:303px;top:502px;width:1367px;height:31px;background:#f5f7fa"></div>
<div class="a" style="left:303px;top:533px;width:1367px;height:1px;background:#d3dae6"></div>
<div class="a" style="left:326px;top:533px;width:1px;height:1px;background:#fff"></div>
<div class="a" style="left:406px;top:533px;width:1px;height:1px;background:#fff"></div>
<div class="a" style="left:618px;top:533px;width:1px;height:1px;background:#fff"></div>
<div class="a" style="left:938px;top:533px;width:1px;height:1px;background:#fff"></div>
<div class="a" style="left:308px;top:510px;width:16px;height:16px;border:1px solid #8e949e;border-radius:4px;background:#fff"></div>
<svg class="s" style="left:330px;top:508px;" width="70" height="20" viewBox="330 508 70 20"><g fill="none" stroke="#343741" stroke-width="0.95" stroke-opacity="0.9"><path d="M335.6 521.9 L342.4 515.1"/><path d="M340.6 513.4 H343.8 V516.6"/><path d="M334.2 519.4 V522.6 H337.4"/></g>
<g fill="none" stroke="#343741" stroke-width="1.1"><path d="M362.8 523.4 H359.6 V512.6 H365.4 L368.2 515.4 V518.2"/></g>
<path d="M365.2 512.6 L368.2 515.6" stroke="#343741" stroke-width="2"/>
<path d="M357.7 514.4 V523.4" stroke="#a6abb5" stroke-width="1"/>
<circle cx="366" cy="521.1" r="3.1" fill="#343741"/><path d="M364.5 521.2 L365.6 522.2 L367.5 520.1" fill="none" stroke="#fff" stroke-width="0.9"/>
<g fill="none" stroke="#b4b9c2" stroke-width="1"><rect x="381.8" y="512.7" width="10.6" height="10.6"/><path d="M383.3 514.6 h6.4 M384.3 516.5 h4 M385.3 519.2 h2.5 M387.4 521.5 h3.6"/></g></svg>
<div class="t" style="left:415.5px;top:513.4px;font-size:12px;font-weight:normal;color:#343741;letter-spacing:0px;font-family:'Liberation Mono',monospace;">Aug 27, 2024 @ 23:19:04.824</div>
<div class="a" style="left:627px;top:508px;width:172px;height:20px;border:1px solid #d3dae6;border-radius:4px;background:#fff"></div>
<div class="t" style="left:636.3px;top:511.4px;font-size:13px;font-weight:normal;color:#1a1c21;letter-spacing:0.01px;-webkit-text-stroke:0.35px #1a1c21;">7288659551373592801</div>
<svg class="s" style="left:776px;top:512px;" width="16" height="12" viewBox="776 512 16 12"><path d="M780.1 515.65 L784.4 519.9499999999999 L788.6999999999999 515.65" fill="none" stroke="#343741" stroke-width="1.3"/></svg>
<div class="t" style="left:952.6px;top:513.8px;font-size:12px;color:#1a1c21;font-weight:bold;font-family:Liberation Mono,monospace">error.message</div>
<div class="t" style="left:1051.2px;top:513.8px;font-size:12px;color:#343741;font-family:Liberation Mono,monospace">Processor json with tag json_original in pipeline logs-neo4j.neo4j-1.0.0 failed wit…</div>
<div class="a" style="left:303px;top:565px;width:1367px;height:1px;background:#d3dae6"></div>
<div class="a" style="left:326px;top:565px;width:1px;height:1px;background:#fff"></div>
<div class="a" style="left:406px;top:565px;width:1px;height:1px;background:#fff"></div>
<div class="a" style="left:618px;top:565px;width:1px;height:1px;background:#fff"></div>
<div class="a" style="left:938px;top:565px;width:1px;height:1px;background:#fff"></div>
<div class="a" style="left:308px;top:542px;width:16px;height:16px;border:1px solid #8e949e;border-radius:4px;background:#fff"></div>
<svg class="s" style="left:330px;top:540px;" width="70" height="20" viewBox="330 540 70 20"><g fill="none" stroke="#343741" stroke-width="0.95" stroke-opacity="0.9"><path d="M335.6 553.9 L342.4 547.1"/><path d="M340.6 545.4 H343.8 V548.6"/><path d="M334.2 551.4 V554.6 H337.4"/></g>
<g fill="none" stroke="#343741" stroke-width="1.1"><path d="M362.8 555.4 H359.6 V544.6 H365.4 L368.2 547.4 V550.2"/></g>
<path d="M365.2 544.6 L368.2 547.6" stroke="#343741" stroke-width="2"/>
<path d="M357.7 546.4 V555.4" stroke="#a6abb5" stroke-width="1"/>
<circle cx="366" cy="553.1" r="3.1" fill="#343741"/><path d="M364.5 553.2 L365.6 554.2 L367.5 552.1" fill="none" stroke="#fff" stroke-width="0.9"/>
<g fill="none" stroke="#b4b9c2" stroke-width="1"><rect x="381.8" y="544.7" width="10.6" height="10.6"/><path d="M383.3 546.6 h6.4 M384.3 548.5 h4 M385.3 551.2 h2.5 M387.4 553.5 h3.6"/></g></svg>
<div class="t" style="left:415.5px;top:545.4px;font-size:12px;font-weight:normal;color:#343741;letter-spacing:0px;font-family:'Liberation Mono',monospace;">Aug 27, 2024 @ 23:19:04.824</div>
<div class="a" style="left:627px;top:540px;width:172px;height:20px;border:1px solid #d3dae6;border-radius:4px;background:#fff"></div>
<div class="t" style="left:636.3px;top:543.4px;font-size:13px;font-weight:normal;color:#1a1c21;letter-spacing:0.01px;-webkit-text-stroke:0.35px #1a1c21;">7288659551373592801</div>
<svg class="s" style="left:776px;top:544px;" width="16" height="12" viewBox="776 544 16 12"><path d="M780.1 547.65 L784.4 551.9499999999999 L788.6999999999999 547.65" fill="none" stroke="#343741" stroke-width="1.3"/></svg>
<div class="t" style="left:952.6px;top:545.8px;font-size:12px;color:#1a1c21;font-weight:bold;font-family:Liberation Mono,monospace">error.message</div>
<div class="t" style="left:1051.2px;top:545.8px;font-size:12px;color:#343741;font-family:Liberation Mono,monospace">Processor json with tag json_original in pipeline logs-neo4j.neo4j-1.0.0 failed wit…</div>
<div class="a" style="left:303px;top:566px;width:1367px;height:31px;background:#f5f7fa"></div>
<div class="a" style="left:303px;top:597px;width:1367px;height:1px;background:#d3dae6"></div>
<div class="a" style="left:326px;top:597px;width:1px;height:1px;background:#fff"></div>
<div class="a" style="left:406px;top:597px;width:1px;height:1px;background:#fff"></div>
<div class="a" style="left:618px;top:597px;width:1px;height:1px;background:#fff"></div>
<div class="a" style="left:938px;top:597px;width:1px;height:1px;background:#fff"></div>
<div class="a" style="left:308px;top:574px;width:16px;height:16px;border:1px solid #8e949e;border-radius:4px;background:#fff"></div>
<svg class="s" style="left:330px;top:572px;" width="70" height="20" viewBox="330 572 70 20"><g fill="none" stroke="#343741" stroke-width="0.95" stroke-opacity="0.9"><path d="M335.6 585.9 L342.4 579.1"/><path d="M340.6 577.4 H343.8 V580.6"/><path d="M334.2 583.4 V586.6 H337.4"/></g>
<g fill="none" stroke="#343741" stroke-width="1.1"><path d="M362.8 587.4 H359.6 V576.6 H365.4 L368.2 579.4 V582.2"/></g>
<path d="M365.2 576.6 L368.2 579.6" stroke="#343741" stroke-width="2"/>
<path d="M357.7 578.4 V587.4" stroke="#a6abb5" stroke-width="1"/>
<circle cx="366" cy="585.1" r="3.1" fill="#343741"/><path d="M364.5 585.2 L365.6 586.2 L367.5 584.1" fill="none" stroke="#fff" stroke-width="0.9"/>
<g fill="none" stroke="#b4b9c2" stroke-width="1"><rect x="381.8" y="576.7" width="10.6" height="10.6"/><path d="M383.3 578.6 h6.4 M384.3 580.5 h4 M385.3 583.2 h2.5 M387.4 585.5 h3.6"/></g></svg>
<div class="t" style="left:415.5px;top:577.4px;font-size:12px;font-weight:normal;color:#343741;letter-spacing:0px;font-family:'Liberation Mono',monospace;">Aug 27, 2024 @ 23:19:04.824</div>
<div class="a" style="left:627px;top:572px;width:172px;height:20px;border:1px solid #d3dae6;border-radius:4px;background:#fff"></div>
<div class="t" style="left:636.3px;top:575.4px;font-size:13px;font-weight:normal;color:#1a1c21;letter-spacing:0.01px;-webkit-text-stroke:0.35px #1a1c21;">7288659551373592801</div>
<svg class="s" style="left:776px;top:576px;" width="16" height="12" viewBox="776 576 16 12"><path d="M780.1 579.65 L784.4 583.9499999999999 L788.6999999999999 579.65" fill="none" stroke="#343741" stroke-width="1.3"/></svg>
<div class="t" style="left:952.6px;top:577.8px;font-size:12px;color:#1a1c21;font-weight:bold;font-family:Liberation Mono,monospace">error.message</div>
<div class="t" style="left:1051.2px;top:577.8px;font-size:12px;color:#343741;font-family:Liberation Mono,monospace">Processor json with tag json_original in pipeline logs-neo4j.neo4j-1.0.0 failed wit…</div>
<div class="a" style="left:303px;top:629px;width:1367px;height:1px;background:#d3dae6"></div>
<div class="a" style="left:326px;top:629px;width:1px;height:1px;background:#fff"></div>
<div class="a" style="left:406px;top:629px;width:1px;height:1px;background:#fff"></div>
<div class="a" style="left:618px;top:629px;width:1px;height:1px;background:#fff"></div>
<div class="a" style="left:938px;top:629px;width:1px;height:1px;background:#fff"></div>
<div class="a" style="left:308px;top:606px;width:16px;height:16px;border:1px solid #8e949e;border-radius:4px;background:#fff"></div>
<svg class="s" style="left:330px;top:604px;" width="70" height="20" viewBox="330 604 70 20"><g fill="none" stroke="#343741" stroke-width="0.95" stroke-opacity="0.9"><path d="M335.6 617.9 L342.4 611.1"/><path d="M340.6 609.4 H343.8 V612.6"/><path d="M334.2 615.4 V618.6 H337.4"/></g>
<g fill="none" stroke="#343741" stroke-width="1.1"><path d="M362.8 619.4 H359.6 V608.6 H365.4 L368.2 611.4 V614.2"/></g>
<path d="M365.2 608.6 L368.2 611.6" stroke="#343741" stroke-width="2"/>
<path d="M357.7 610.4 V619.4" stroke="#a6abb5" stroke-width="1"/>
<circle cx="366" cy="617.1" r="3.1" fill="#343741"/><path d="M364.5 617.2 L365.6 618.2 L367.5 616.1" fill="none" stroke="#fff" stroke-width="0.9"/>
<g fill="none" stroke="#b4b9c2" stroke-width="1"><rect x="381.8" y="608.7" width="10.6" height="10.6"/><path d="M383.3 610.6 h6.4 M384.3 612.5 h4 M385.3 615.2 h2.5 M387.4 617.5 h3.6"/></g></svg>
<div class="t" style="left:415.5px;top:609.4px;font-size:12px;font-weight:normal;color:#343741;letter-spacing:0px;font-family:'Liberation Mono',monospace;">Aug 27, 2024 @ 23:19:04.824</div>
<div class="a" style="left:627px;top:604px;width:172px;height:20px;border:1px solid #d3dae6;border-radius:4px;background:#fff"></div>
<div class="t" style="left:636.3px;top:607.4px;font-size:13px;font-weight:normal;color:#1a1c21;letter-spacing:0.01px;-webkit-text-stroke:0.35px #1a1c21;">7288659551373592801</div>
<svg class="s" style="left:776px;top:608px;" width="16" height="12" viewBox="776 608 16 12"><path d="M780.1 611.65 L784.4 615.9499999999999 L788.6999999999999 611.65" fill="none" stroke="#343741" stroke-width="1.3"/></svg>
<div class="t" style="left:952.6px;top:609.8px;font-size:12px;color:#1a1c21;font-weight:bold;font-family:Liberation Mono,monospace">error.message</div>
<div class="t" style="left:1051.2px;top:609.8px;font-size:12px;color:#343741;font-family:Liberation Mono,monospace">Processor json with tag json_original in pipeline logs-neo4j.neo4j-1.0.0 failed wit…</div>
</body></html>
